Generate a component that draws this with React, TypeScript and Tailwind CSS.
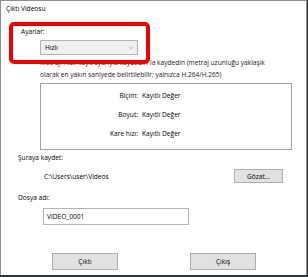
import { ChevronDown } from 'lucide-react';

const rows = [
  { label: 'Biçim:', value: 'Kayıtlı Değer' },
  { label: 'Boyut:', value: 'Kayıtlı Değer' },
  { label: 'Kare hızı:', value: 'Kayıtlı Değer' },
];

export default function App() {
  return (
    <div className="w-[308px] h-[277px] bg-[#2f3437] overflow-hidden font-['Open_Sans',sans-serif] text-[6.6px] leading-[9px] text-black">
      <div className="relative w-[307px] h-[275px] bg-white border-t border-l border-r border-[#8e8e8e] flex flex-col">
        <div className="pl-[5px] pt-[3px]">Çıktı Videosu</div>

        <div className="pl-[20px] mt-[14px]">Ayarlar:</div>

        <div className="ml-[39px] mt-[4px] w-[98px] h-[15px] bg-[#f0f0f0] border border-[#b4b4b4] flex items-center justify-between pl-[4px] pr-[3px]">
          <span>Hızlı</span>
          <ChevronDown size={6} strokeWidth={1.5} className="text-[#555]" />
        </div>

        <div className="ml-[39px] mt-[2px] leading-[12px] text-[#1a1a1a] whitespace-nowrap">
          <div className="flex">
            <span className="inline-block w-[110px] overflow-hidden">Metrajı Hızlı kayıt ayarıyla kaydedin</span>
            <span>la kaydedin (metraj uzunluğu yaklaşık</span>
          </div>
          <div>olarak en yakın saniyede belirtilebilir; yalnızca H.264/H.265)</div>
        </div>

        <div className="ml-[39px] mt-[2px] w-[252px] h-[67px] border border-[#a0a0a0] grid grid-cols-[97px_1fr] gap-x-[4px] content-start pt-[7px] gap-y-[10px]">
          {rows.map((row) => (
            <div key={row.label} className="contents">
              <span className="text-right">{row.label}</span>
              <span>{row.value}</span>
            </div>
          ))}
        </div>

        <div className="pl-[17px] mt-[3px]">Şuraya kaydet:</div>

        <div className="ml-[43px] mr-[23px] mt-[7px] flex items-center justify-between">
          <span>C:\Users\user\Videos</span>
          <button className="w-[49px] h-[14px] bg-[#e1e1e1] border border-[#adadad] flex items-center justify-center">
            Gözat...
          </button>
        </div>

        <div className="pl-[17px] mt-[10px]">Dosya adı:</div>

        <div className="ml-[42px] mt-[6px] w-[146px] h-[17px] border border-[#b4b4b4] flex items-center px-[3px]">
          VIDEO_0001
        </div>

        <div className="mt-[28px] flex pl-[51px] gap-[72px]">
          <button className="w-[66px] h-[17px] bg-[#e1e1e1] border border-[#adadad] flex items-center justify-center">
            Çıktı
          </button>
          <button className="w-[66px] h-[17px] bg-[#e1e1e1] border border-[#adadad] flex items-center justify-center">
            Çıkış
          </button>
        </div>

        <div className="absolute left-[8px] top-[21px] w-[141px] h-[42px] border-[4px] border-[#ee0000] rounded-[5px] pointer-events-none" />
      </div>
    </div>
  );
}
